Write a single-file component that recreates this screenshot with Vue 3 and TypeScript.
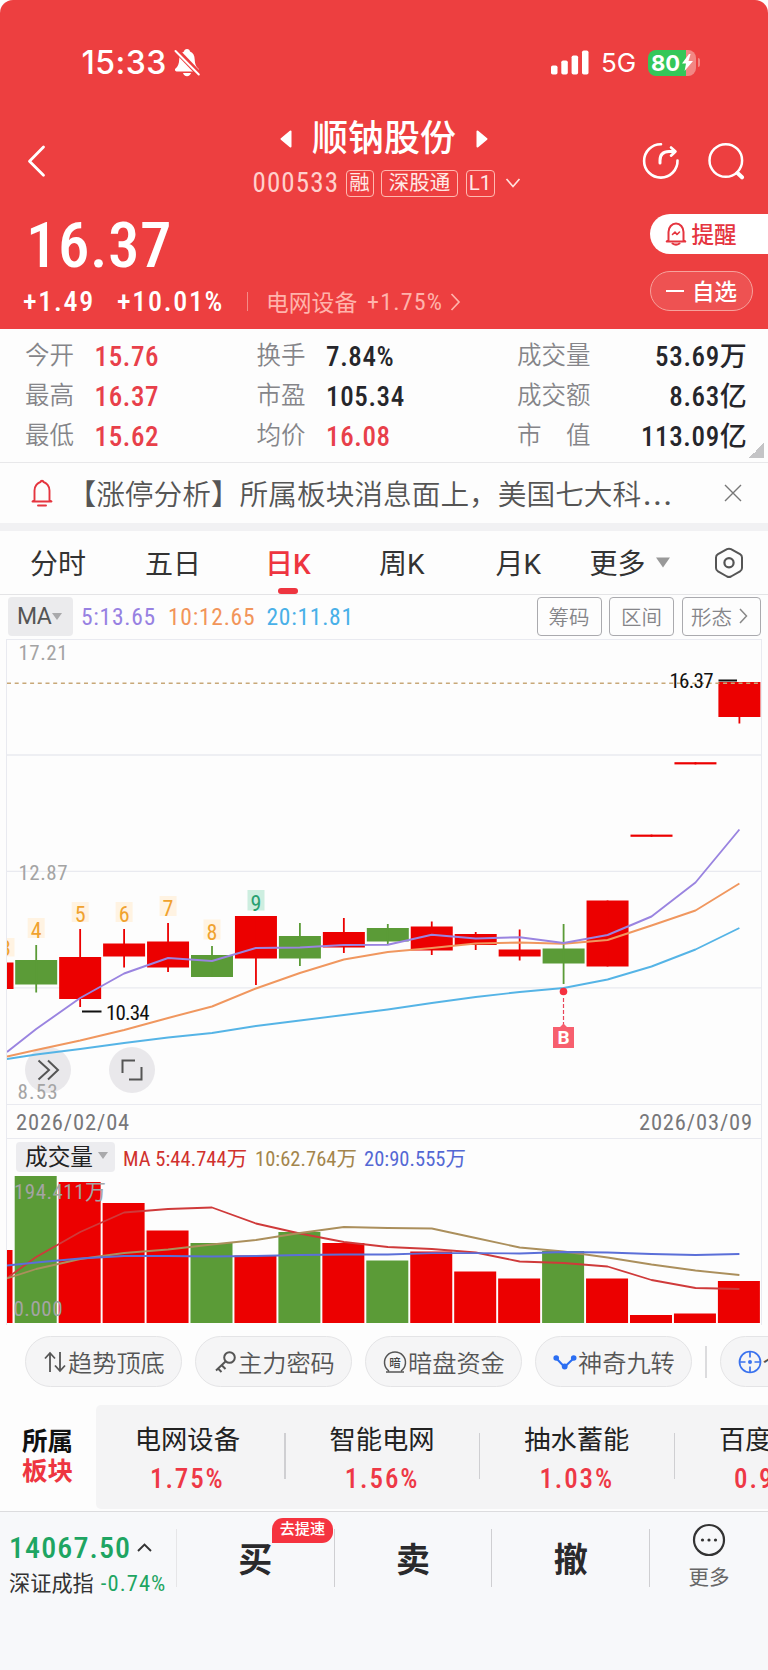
<script setup lang="ts">
interface Candle { top: number; bottom: number; high: number; low: number; up: boolean; vol: number; mark?: string; markY?: number }

const step = 43.95
const firstX = 36.2
const cx = (i: number): number => firstX + i * step

const candles: Candle[] = [
  { top: 960, bottom: 984.5, high: 945, low: 992.5, up: false, vol: 1176, mark: '4', markY: 931 },
  { top: 957, bottom: 999, high: 929, low: 1007, up: true, vol: 1182, mark: '5', markY: 915 },
  { top: 943.5, bottom: 956.5, high: 929, low: 967.5, up: true, vol: 1203, mark: '6', markY: 915 },
  { top: 941.5, bottom: 967.5, high: 923, low: 972, up: true, vol: 1230.5, mark: '7', markY: 909 },
  { top: 955, bottom: 977, high: 946, low: 977, up: false, vol: 1243, mark: '8', markY: 932.5 },
  { top: 916, bottom: 958.5, high: 916, low: 985, up: true, vol: 1255.5 },
  { top: 936, bottom: 958.5, high: 923, low: 966, up: false, vol: 1232 },
  { top: 932, bottom: 947.5, high: 918, low: 953, up: true, vol: 1243 },
  { top: 928, bottom: 941.5, high: 924, low: 944, up: false, vol: 1260.5 },
  { top: 926.5, bottom: 950.5, high: 921.5, low: 955, up: true, vol: 1251.5 },
  { top: 934, bottom: 945, high: 932, low: 950, up: true, vol: 1271.5 },
  { top: 949.5, bottom: 956.5, high: 929.5, low: 960.5, up: true, vol: 1278.5 },
  { top: 948.5, bottom: 963.5, high: 924, low: 984, up: false, vol: 1251 },
  { top: 900.5, bottom: 966.5, high: 900.5, low: 966.5, up: true, vol: 1278.5 },
  { top: 834.6, bottom: 836.8, high: 834.6, low: 836.8, up: true, vol: 1315 },
  { top: 762.2, bottom: 764.4, high: 762.2, low: 764.4, up: true, vol: 1313.5 },
  { top: 682, bottom: 717, high: 682, low: 723.5, up: true, vol: 1281 },
]

const line = (start: number, ys: number[]): string =>
  [`7,${start}`, ...ys.map((y, i) => `${cx(i).toFixed(1)},${y}`)].join(' ')

const ma5 = line(1052, [1029, 998, 973.5, 958, 961, 948, 947.5, 945, 944.8, 934.8, 938.5, 937.2, 943, 935, 916.5, 882.5, 829.5])
const ma10 = line(1056.5, [1050, 1040.5, 1030, 1018, 1006.5, 988.5, 973, 959.5, 952, 948, 943.5, 942.5, 943.8, 940, 925.5, 910.5, 883.5])
const ma20 = line(1059, [1054.5, 1049, 1043, 1037.5, 1033, 1026, 1020.5, 1015, 1009.5, 1003, 997, 992, 988, 979.5, 966.5, 949.5, 928])

const vma5 = line(1278, [1257, 1232, 1212.5, 1209, 1207.5, 1223.5, 1233.5, 1242, 1247, 1249, 1252.5, 1261.5, 1263, 1266.5, 1280, 1288, 1289])
const vma10 = line(1278.5, [1269, 1259, 1253, 1249.5, 1244.5, 1240, 1233, 1227, 1228, 1228.5, 1238, 1247.5, 1251.5, 1257.5, 1264.5, 1270.5, 1275])
const vma20 = line(1265.5, [1262.5, 1258.5, 1256, 1256, 1256.5, 1256, 1255, 1254.5, 1254.5, 1253.2, 1253.2, 1253.5, 1252, 1252.5, 1254, 1255, 1254])

const stats = [
  [['今开', '15.76', 'up'], ['换手', '7.84%', ''], ['成交量', '53.69万', '']],
  [['最高', '16.37', 'up'], ['市盈', '105.34', ''], ['成交额', '8.63亿', '']],
  [['最低', '15.62', 'up'], ['均价', '16.08', 'up'], ['市　值', '113.09亿', '']],
]

const sectors = [
  { name: '电网设备', pct: '1.75%' },
  { name: '智能电网', pct: '1.56%' },
  { name: '抽水蓄能', pct: '1.03%' },
  { name: '百度', pct: '0.9' },
]
</script>

<template>
  <main class="page">
    <header class="head">
      <div class="status">
        <span class="clock">15:33</span>
        <svg class="mute" width="28" height="30" viewBox="173 48 28 30">
          <path d="M187 49c-1.800 0-2.800 1-3 2.400-3.400 1.300-4.700 4.300-4.800 8-.1 4.600-1.400 7-3.700 9.200-1 1-.6 2.800 1 2.800h20.800c1.600 0 2-1.800 1-2.800-2.300-2.200-3.500-4.600-3.600-9.200-.1-3.700-1.400-6.700-4.700-8-.2-1.400-1.200-2.400-3-2.400z" fill="#fff" />
          <path d="M183 73h8c-.5 2-2 3.200-4 3.200s-3.500-1.200-4-3.200z" fill="#fff" />
          <path d="M176.500 50.500l23 24" stroke="#ed3f40" stroke-width="5.500" />
          <path d="M175.500 51l23.300 23.500" stroke="#fff" stroke-width="2" stroke-linecap="round" />
        </svg>
        <svg class="bars" width="38" height="25" viewBox="0 0 38 25" fill="#fff">
          <rect x="0" y="15.500" width="6.500" height="9" rx="1.800" />
          <rect x="10.300" y="10.500" width="6.500" height="14" rx="1.800" />
          <rect x="20.600" y="5.500" width="6.500" height="19" rx="1.800" />
          <rect x="31" y="0.500" width="6.500" height="24" rx="1.800" />
        </svg>
        <span class="net">5G</span>
        <span class="battery">
          <span class="level">80</span>
          <svg class="bolt" width="11" height="17" viewBox="0 0 11 17"><path d="M7 0L0 9.500h4L2.600 17 11 7H6.500L8.600 0z" fill="#fff" /></svg>
        </span>
        <span class="nub"></span>
      </div>

      <div class="nav">
        <svg class="back" width="20" height="34" viewBox="0 0 20 34"><path d="M16.500 3L2.500 17.200l14 14" fill="none" stroke="#fff" stroke-width="2.800" stroke-linecap="round" stroke-linejoin="round" /></svg>
        <div class="center">
          <div class="titleline">
            <svg width="12" height="18" viewBox="0 0 12 18"><path d="M10.500 1.500v15L1.500 9z" fill="#fff" stroke="#fff" stroke-width="2" stroke-linejoin="round" /></svg>
            <h1>顺钠股份</h1>
            <svg width="12" height="18" viewBox="0 0 12 18"><path d="M1.500 1.500v15l9-7.500z" fill="#fff" stroke="#fff" stroke-width="2" stroke-linejoin="round" /></svg>
          </div>
          <div class="codeline">
            <span class="code">000533</span>
            <span class="tag t1">融</span><span class="tag t2">深股通</span><span class="tag t3">L1</span>
            <svg width="16" height="12" viewBox="0 0 16 12"><path d="M1.500 2l6.500 7.500L14.500 2" fill="none" stroke="#ffe0dc" stroke-width="1.700" /></svg>
          </div>
        </div>
        <svg class="share" width="38" height="38" viewBox="642 142 38 38" fill="none" stroke="#fff" stroke-width="2.600" stroke-linecap="round" stroke-linejoin="round">
          <path d="M661 144.200a16.700 16.700 0 1 0 16.500 16.300" />
          <path d="M660 163v-2.500c0-6 3.500-9 9-9h5" stroke-width="3" />
          <path d="M671 147.500l4.500 4-4.500 4.200" />
        </svg>
        <svg class="search" width="38" height="38" viewBox="708 142 38 38" fill="none" stroke="#fff" stroke-linecap="round">
          <circle cx="725.800" cy="160.500" r="16.300" stroke-width="2.500" />
          <path d="M737.500 173l4.500 4.300" stroke-width="4" />
        </svg>
      </div>

      <div class="quote">
        <div class="qleft">
          <div class="price">16.37</div>
          <div class="change">
            <b class="c1">+1.49</b><b class="c2">+10.01%</b><i class="bar"></i>
            <span class="ind">电网设备</span><span class="indp">+1.75%</span>
            <svg width="11" height="18" viewBox="0 0 11 18"><path d="M1.500 1l7.500 8-7.500 8" fill="none" stroke="#ffb3ab" stroke-width="1.700" /></svg>
          </div>
        </div>
        <div class="qright">
          <div class="remind">
            <svg width="22" height="24" viewBox="0 0 22 24" fill="none" stroke="#e5353f" stroke-width="2" stroke-linejoin="round" stroke-linecap="round">
              <path d="M3.500 18V10a7.500 8.500 0 0 1 15 0v8l1.800 1.500H1.700z" /><path d="M7.500 21.500c2 1.300 5 1.300 7 0" /><path d="M7.500 12.500l2.500-2.500 2 2.500 2.500-2.500" stroke-width="1.600" />
            </svg>
            <span>提醒</span>
          </div>
          <div class="watch"><i></i><span>自选</span></div>
        </div>
      </div>
    </header>

    <section class="stats">
      <div v-for="(row, r) in stats" :key="r" class="srow">
        <template v-for="(c, k) in row" :key="k">
          <span :class="['lab', 'l' + k]">{{ c[0] }}</span>
          <span :class="['val', 'v' + k, c[2]]">{{ c[1] }}</span>
        </template>
      </div>
      <i class="corner"></i>
    </section>

    <section class="notice">
      <svg width="22" height="28" viewBox="0 0 22 28" fill="none" stroke="#e5353f" stroke-width="1.900" stroke-linejoin="round" stroke-linecap="round">
        <path d="M3.500 21V11.500C3.500 7 6.500 3.800 9.500 3c.3-1.700 2.700-1.700 3 0 3 .8 6 4 6 8.500V21l2 1.500h-19z" /><path d="M7 26.500h8" />
      </svg>
      <p>【涨停分析】所属板块消息面上，美国七大科<span class="dots">...</span></p>
      <svg class="close" width="18" height="18" viewBox="0 0 18 18"><path d="M1 1l16 16M17 1L1 17" stroke="#777" stroke-width="1.400" /></svg>
    </section>

    <nav class="tabs">
      <span class="tab p1">分时</span><span class="tab p2">五日</span><span class="tab p3 on">日K</span>
      <span class="tab p4">周K</span><span class="tab p5">月K</span><span class="tab p6">更多</span>
      <svg class="drop" width="14" height="11" viewBox="0 0 14 11"><path d="M0 .5h14L7 10.500z" fill="#999" /></svg>
      <svg class="hex" width="30" height="32" viewBox="0 0 30 32" fill="none" stroke="#555" stroke-width="2" stroke-linejoin="round">
        <path d="M13 2.200q2-1 4 0l9 5q2 1.200 2 3.300v10.500q0 2.200-2 3.300l-9 5.200q-2 1-4 0l-9-5.200q-2-1.100-2-3.300V10.500q0-2.100 2-3.300z" /><circle cx="15" cy="15.800" r="4.600" stroke-width="2.200" />
      </svg>
    </nav>

    <section class="marow">
      <span class="machip">MA<i></i></span>
      <span class="m m5">5:13.65</span><span class="m m10">10:12.65</span><span class="m m20">20:11.81</span>
      <span class="btn b1">筹码</span><span class="btn b2">区间</span>
      <span class="btn b3">形态<svg width="9" height="16" viewBox="0 0 9 16"><path d="M1 1l6.500 7L1 15" fill="none" stroke="#888" stroke-width="1.500" /></svg></span>
    </section>

    <section class="charts">
      <div class="kline">
        <svg width="754" height="464" viewBox="7 640 754 464">
          <g stroke="#e9eaf0" stroke-width="1.300">
            <path d="M7 755H761M7 871.300H761M7 987.800H761" />
          </g>
          <g class="axis">
            <text x="18.500" y="659.500" textLength="49">17.21</text>
            <text x="18.500" y="879.500" textLength="49">12.87</text>
          </g>
          <circle cx="48" cy="1070" r="23" fill="#e9e8eb" />
          <circle cx="132" cy="1070" r="23" fill="#e9e8eb" />
          <text class="axis" x="17.500" y="1099" textLength="40">8.53</text>
          <path d="M38.500 1060.500l10.500 9.500-10.500 9.500M48 1060.500l10 9.500-10 9.500" fill="none" stroke="#555" stroke-width="2" />
          <path d="M122.500 1073v-12.500h12.500M141.500 1067v12.500h-12.500" fill="none" stroke="#555" stroke-width="2" />

          <rect x="6" y="962.500" width="7.500" height="26.500" fill="#ec0000" />
          <rect x="5" y="938" width="9.500" height="18.500" fill="#fff3e2" />
          <text class="mark" x="5.500" y="955.500" text-anchor="middle">3</text>
          <g v-for="(c, i) in candles" :key="i" :fill="c.up ? '#ec0000' : '#5b9b37'">
            <rect :x="cx(i) - 21" :y="c.top" width="42" :height="c.bottom - c.top" />
            <rect :x="cx(i) - 0.9" :y="c.high" width="1.800" :height="c.low - c.high" />
            <g v-if="c.mark && c.markY">
              <rect :x="cx(i) - 8.500" :y="c.markY - 13" width="17" height="20" fill="#fff3e2" />
              <text class="mark" :x="cx(i)" :y="c.markY + 7" text-anchor="middle">{{ c.mark }}</text>
            </g>
          </g>
          <rect x="247.500" y="890" width="17" height="20.500" fill="#cdeee0" />
          <text class="mark nine" x="256" y="910.500" text-anchor="middle">9</text>

          <path d="M7 683.200H761" stroke="#c8a878" stroke-width="1.500" stroke-dasharray="4 3.700" />
          <g fill="none" stroke-width="1.900" stroke-linejoin="round">
            <polyline :points="ma20" stroke="#55b4e6" />
            <polyline :points="ma10" stroke="#f0975f" />
            <polyline :points="ma5" stroke="#9a84e0" />
          </g>
          <path d="M82 1011.500h19.500M718.500 680.500h18.500" stroke="#111" stroke-width="2" />
          <text class="tip" x="106" y="1019.500" textLength="43.500">10.34</text>
          <text class="tip" x="669.500" y="688" textLength="44">16.37</text>
          <circle cx="563.500" cy="991.500" r="3.800" fill="#f5303f" />
          <path d="M563.500 998v27" stroke="#e8455a" stroke-width="1.200" stroke-dasharray="4 2" />
          <path d="M553 1027h7l3.500-3.500 3.500 3.500h7v21h-21z" fill="#f75f6e" />
          <text class="bmark" x="563.500" y="1044" text-anchor="middle">B</text>
        </svg>
      </div>
      <div class="dates"><span>2026/02/04</span><span>2026/03/09</span></div>
      <div class="vlegend">
        <span class="vchip">成交量<i></i></span>
        <span class="v5">MA 5:44.744万</span><span class="v10">10:62.764万</span><span class="v20">20:90.555万</span>
      </div>
      <svg class="vol" width="754" height="150" viewBox="7 1175 754 150">
        <rect x="6" y="1250" width="6.500" height="73" fill="#ec0000" />
        <rect v-for="(c, i) in candles" :key="i" :x="cx(i) - 21.500" :y="c.vol" width="42" :height="1323 - c.vol" :fill="c.up ? '#ec0000' : '#5b9b37'" />
        <g class="axis">
          <text x="14" y="1198.500" textLength="92">194.411万</text>
          <text x="13.500" y="1316" textLength="49">0.000</text>
        </g>
        <g fill="none" stroke-width="1.800" stroke-linejoin="round">
          <polyline :points="vma5" stroke="#cf3a3a" />
          <polyline :points="vma10" stroke="#ab8f5c" />
          <polyline :points="vma20" stroke="#5b6fd8" />
        </g>
      </svg>
    </section>

    <section class="pills">
      <span class="pill">
        <svg width="24" height="24" viewBox="0 0 24 24" fill="none" stroke="#555" stroke-width="1.800"><path d="M7 22V3M2 8.500L7 3l5 5.500M17 2v19M12 15.500l5 5.500 5-5.500" /></svg>趋势顶底
      </span>
      <span class="pill">
        <svg width="24" height="24" viewBox="0 0 24 24" fill="none" stroke="#555" stroke-width="2"><circle cx="16.500" cy="7.500" r="5.300" /><path d="M12.500 11.500L3 20.500M8.500 15l4 4M5 18.500l3.500 3.500" /></svg>主力密码
      </span>
      <span class="pill">
        <svg width="24" height="24" viewBox="0 0 24 24" fill="none" stroke="#555" stroke-width="1.500"><path d="M6 21a10.500 10.500 0 1 1 12 0M3 22h18" /><text x="12" y="16.500" text-anchor="middle" class="dark">暗</text></svg>暗盘资金
      </span>
      <span class="pill">
        <svg width="24" height="24" viewBox="0 0 24 24" fill="#2b6ef2"><path d="M3 8l8.500 9L21 8" fill="none" stroke="#2b6ef2" stroke-width="2" /><circle cx="3.200" cy="8" r="2.800" /><circle cx="11.700" cy="16.500" r="2.900" /><circle cx="20.700" cy="8" r="2.800" /></svg>神奇九转
      </span>
      <i class="sep"></i>
      <span class="pill last">
        <svg width="24" height="24" viewBox="0 0 24 24" fill="none" stroke="#3a72ee" stroke-width="1.700"><circle cx="12" cy="12" r="10.500" /><path d="M12 1.500v6M12 16.500v6M1.500 12h6M16.500 12h6" /><circle cx="12" cy="12" r="2" fill="#3a72ee" stroke="none" /></svg>个股
      </span>
    </section>

    <section class="sector">
      <div class="slabel"><b>所属</b><b class="r">板块</b></div>
      <div class="spanel">
        <div v-for="s in sectors" :key="s.name" class="sitem"><span>{{ s.name }}</span><em>{{ s.pct }}</em></div>
      </div>
    </section>

    <footer class="foot">
      <div class="index">
        <div class="i1">14067.50<svg width="15" height="9" viewBox="0 0 15 9"><path d="M1 8l6.500-6.500L14 8" fill="none" stroke="#333" stroke-width="1.900" /></svg></div>
        <div class="i2"><span>深证成指</span><em>-0.74%</em></div>
      </div>
      <div class="act">买<span class="badge">去提速</span></div>
      <div class="act">卖</div>
      <div class="act">撤</div>
      <div class="more">
        <svg width="34" height="34" viewBox="0 0 34 34"><circle cx="17" cy="17" r="15" fill="none" stroke="#333" stroke-width="2.200" /><g fill="#333"><circle cx="10.500" cy="17" r="1.600" /><circle cx="17" cy="17" r="1.600" /><circle cx="23.500" cy="17" r="1.600" /></g></svg>
        <span>更多</span>
      </div>
    </footer>
  </main>
</template>

<style>
body { background: #f7f8fa; }
</style>

<style scoped>
* { box-sizing: border-box; }
.page { width: 768px; height: 1670px; overflow: hidden; background: #fdfdfd; font-family: Roboto, "Noto Sans CJK SC", sans-serif; color: #222; }
.page span, .page b, .page em, .page p, .page h1 { white-space: nowrap; font-style: normal; }
svg { display: block; flex: none; }
.head { height: 329px; background: #ed3f40; border-radius: 13px 13px 0 0; color: #fff; overflow: hidden; }
.status { display: flex; align-items: center; height: 41px; margin-top: 42px; padding-left: 81.500px; }
.clock { width: 91.500px; font: 500 32px/41px Inter, sans-serif; letter-spacing: 0.500px; }
.bars { margin-left: 349.500px; }
.net { margin-left: 12.500px; width: 47px; font: 400 26px/41px Inter, sans-serif; letter-spacing: 0; }
.battery { display: flex; align-items: center; width: 48px; height: 26px; border-radius: 8px; overflow: hidden; background: linear-gradient(90deg, #34c759 38px, #f28784 38px); }
.level { width: 32px; padding-left: 3px; font: 700 22px/26px Inter, sans-serif; letter-spacing: 0; }
.bolt { margin-left: 2px; }
.nub { width: 2px; height: 9px; margin-left: 1.500px; border-radius: 0 2px 2px 0; background: #f28784; }
.nav { display: flex; align-items: center; height: 91px; margin-top: 32px; }
.back { margin-left: 27px; }
.center { width: 330px; margin-left: 204px; }
.titleline { display: flex; align-items: center; height: 45px; padding-left: 29px; }
.titleline h1 { margin: 0 20px 0 20px; width: 144px; font-size: 36px; line-height: 48px; font-weight: 500; }
.codeline { display: flex; align-items: center; height: 44px; padding-left: 1.500px; }
.code { width: 93px; font-size: 27px; font-weight: 400; font-stretch: 75%; letter-spacing: 1.100px; color: #ffd0cc; }
.tag { height: 27px; line-height: 24px; border: 1.300px solid #ffb9b0; border-radius: 4px; text-align: center; font-size: 20.500px; color: #ffe9e6; margin-right: 7.500px; }
.t1 { width: 28px; } .t2 { width: 77px; } .t3 { width: 29px; margin-right: 10.500px; }
.share { margin-left: 61px; }
.search { margin-left: 28px; }
.quote { display: flex; justify-content: space-between; }
.price { height: 77px; padding-left: 26px; font-size: 63px; line-height: 80px; font-weight: 500; font-stretch: 75%; letter-spacing: 0.500px; }
.change { display: flex; align-items: center; height: 37px; padding-left: 23px; }
.change b { font-size: 28px; font-weight: 500; font-stretch: 75%; letter-spacing: 1.700px; }
.c1 { width: 94px; } .c2 { width: 129.500px; }
.bar { width: 1.500px; height: 19px; background: #f58b86; margin-right: 18px; }
.ind { width: 101px; font-size: 22.800px; color: #ffb3ab; }
.indp { width: 83px; font-size: 24px; color: #ffb3ab; font-stretch: 75%; letter-spacing: 1.200px; }
.qright { width: 118.500px; padding-top: 8px; }
.remind { display: flex; align-items: center; height: 40px; padding-left: 15px; gap: 5px; background: #fff; color: #e5353f; border-radius: 20px 0 0 20px; font-size: 22.500px; font-weight: 500; }
.watch { display: flex; align-items: center; width: 103px; height: 40px; margin-top: 17px; padding-left: 15.500px; border: 1.300px solid #f6a29c; border-radius: 20px; background: #ee5252; font-size: 22.500px; font-weight: 500; }
.watch i { width: 18px; height: 2px; background: #fff; margin-right: 8px; }
.remind span, .watch span { margin-top: -2px; }
.stats { position: relative; height: 134px; padding-top: 6px; border-bottom: 1.500px solid #e8e8ea; }
.srow { display: flex; height: 40px; line-height: 41px; }
.lab { font-size: 24.500px; color: #858589; font-weight: 350; }
.val { font-size: 27px; font-weight: 500; font-stretch: 75%; line-height: 45px; letter-spacing: 0.650px; color: #26262b; }
.l0 { margin-left: 25px; width: 69.500px; } .v0 { width: 162px; }
.l1 { width: 69.500px; } .v1 { width: 191px; } .l2 { width: 90px; } .v2 { width: 140.500px; text-align: right; }
.val.up { color: #e8404a; }
.corner { position: absolute; right: 4px; bottom: 4px; width: 15px; height: 15px; background: linear-gradient(135deg, transparent 50%, #c4c4c6 50%); }
.notice { display: flex; align-items: center; height: 60px; padding-left: 31px; }
.notice p { margin: 0; padding: 3px 0 0 14.500px; width: 671px; font-size: 28.700px; line-height: 60px; color: #555; font-weight: 350; }
.dots { letter-spacing: 2.300px; margin-left: 2px; font-weight: 500; }
.tabs { position: relative; display: flex; align-items: center; height: 72px; border-top: 8px solid #f1f1f3; border-bottom: 1.500px solid #e4e4e6; padding-left: 30px; }
.tab { position: relative; font-size: 28px; line-height: 67px; color: #333; height: 63px; }
.p1 { width: 115px; } .p2 { width: 120px; } .p3 { width: 114px; } .p4 { width: 116.500px; } .p5 { width: 94px; } .p6 { width: 66px; }
.on { color: #ee3540; font-weight: 500; }
.on::after { content: ""; position: absolute; left: 12.500px; bottom: 0; width: 20px; height: 6px; border-radius: 3px; background: #ee3540; }
.hex { margin-left: 44px; }
.marow { display: flex; align-items: center; height: 43.500px; padding-left: 8px; }
.machip { display: flex; align-items: center; width: 65px; height: 39px; margin-right: 8px; padding-left: 9px; background: #ebebed; border-radius: 4px; font-size: 23px; letter-spacing: -0.600px; color: #555; }
.machip i, .vchip i { border: 5px solid transparent; border-top: 7px solid #a9a9ab; border-bottom: 0; margin-left: 1px; }
.m { font-size: 23.500px; font-stretch: 75%; letter-spacing: 0.750px; }
.m5 { width: 87px; color: #9781e2; } .m10 { width: 98.500px; color: #f2955a; } .m20 { width: 270px; color: #49b0e8; }
.btn { display: flex; align-items: center; justify-content: center; width: 65px; height: 39px; border: 1.300px solid #aaaaae; border-radius: 4px; font-size: 20.500px; color: #858589; font-weight: 350; margin-right: 7.500px; padding-bottom: 2px; }
.b3 { width: 79px; gap: 7px; margin: 0; padding-right: 3px; }
.charts { margin: 0 6px; border: 1px solid #e9eaf0; border-bottom: 0; height: 686px; }
.kline { height: 464px; }
.axis { font-size: 21px; fill: #a4a4a4; font-stretch: 75%; }
.mark { font-size: 22px; fill: #f0a22e; font-stretch: 75%; }
.nine { fill: #28a070; }
.tip { font-size: 21px; fill: #111; font-stretch: 75%; }
.bmark { font-size: 19px; font-weight: 700; fill: #fff; }
.dates { display: flex; justify-content: space-between; height: 35px; padding: 0 8px 0 9px; border-top: 1px solid #e9eaf0; border-bottom: 1px solid #e9eaf0; font-size: 22.500px; line-height: 35px; color: #77777a; font-stretch: 75%; letter-spacing: 0.850px; }
.vlegend { display: flex; align-items: center; height: 36.500px; padding-left: 9px; font-size: 20.500px; }
.vchip { display: flex; align-items: center; width: 99px; height: 30px; margin-right: 8px; padding: 0 0 2px 9px; background: #ececef; border-radius: 4px; font-size: 22.700px; color: #222; }
.vchip i { margin-left: 5px; }
.vlegend > span:not(.vchip) { font-stretch: 75%; letter-spacing: 0.050px; line-height: 34px; padding-top: 4px; }
.v5 { width: 132px; color: #d0312d; } .v10 { width: 109px; color: #a3854c; } .v20 { color: #5468d4; }
.pills { display: flex; align-items: center; height: 52px; margin-top: 11px; padding-left: 25px; overflow: hidden; }
.pill { display: flex; align-items: center; flex: none; width: 157px; height: 51px; margin-right: 13px; padding-left: 17px; gap: 1px; border: 1px solid #e4e4e6; border-radius: 25.500px; background: #f5f5f6; font-size: 24.200px; font-weight: 350; color: #555; }
.sep { flex: none; width: 1.500px; height: 32px; margin: 0 13px 0 0; background: #dcdcde; }
.dark { font-size: 11.500px; font-weight: 500; fill: #444; stroke: none; }
.sector { display: flex; height: 104px; margin-top: 17px; }
.slabel { display: flex; flex-direction: column; flex: none; width: 96px; padding: 21.500px 0 0 22px; font-size: 25.500px; line-height: 30px; color: #111; }
.slabel .r { color: #ee3540; }
.spanel { display: flex; flex: none; width: 720px; background: #f4f4f5; border-radius: 5px 0 0 5px; }
.sitem { position: relative; left: -6px; display: flex; flex-direction: column; align-items: center; flex: none; width: 194.700px; padding-top: 16px; font-size: 26.300px; line-height: 38px; }
.sitem em { font-size: 27px; line-height: 41px; font-weight: 500; font-stretch: 75%; letter-spacing: 1.900px; color: #ee3846; }
.sitem::after { content: ""; position: absolute; right: -1px; top: 28px; width: 1.300px; height: 46px; background: #cfcfd2; }
.sitem:last-child { align-items: flex-start; padding-left: 45px; }
.sitem:last-child em { padding-left: 15px; }
.foot { display: flex; height: 159px; margin-top: 2px; border-top: 1.500px solid #dcdcde; background: #f7f8fa; }
.index { width: 177px; height: 58px; margin-top: 17px; padding-left: 9px; border-right: 1px solid #e6e6e8; }
.i1 { display: flex; align-items: center; height: 38px; font-size: 30px; font-weight: 500; font-stretch: 75%; letter-spacing: 1.100px; color: #1ea562; }
.i1 svg { margin-left: 6px; }
.i2 { display: flex; align-items: center; height: 30px; font-size: 21.200px; color: #333; }
.i2 em { margin: 2px 0 0 7px; font-size: 22.500px; font-stretch: 75%; letter-spacing: 1.100px; color: #1ea562; }
.act { position: relative; width: 157.800px; height: 58px; margin-top: 17px; line-height: 63px; text-align: center; font-size: 34px; font-weight: 600; color: #2a2a2c; border-right: 1px solid #cfcfd2; }
.badge { position: absolute; left: 95px; top: -10.500px; width: 61px; height: 25px; line-height: 23px; border-radius: 11px 11px 11px 0; background: #f5333f; color: #fff; font-size: 15.200px; font-weight: 500; }
.more { display: flex; flex-direction: column; align-items: center; width: 118px; padding-top: 11px; font-size: 20.500px; color: #666; }
.more span { line-height: 36px; margin-top: 3px; }
</style>
